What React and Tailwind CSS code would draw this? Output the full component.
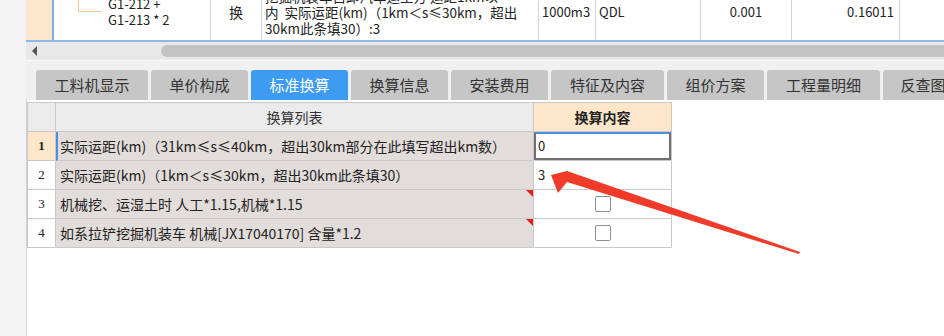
import React from 'react';

const tabs = [
  { label: '工料机显示', w: 'w-[112px]' },
  { label: '单价构成', w: 'w-[97px]' },
  { label: '标准换算', w: 'w-[97px]', active: true },
  { label: '换算信息', w: 'w-[97px]' },
  { label: '安装费用', w: 'w-[97px]' },
  { label: '特征及内容', w: 'w-[113px]' },
  { label: '组价方案', w: 'w-[97px]' },
  { label: '工程量明细', w: 'w-[113px]' },
  { label: '反查图形工程量', w: 'w-[140px]' },
];

const rows = [
  { no: '1', text: '实际运距(km)（31km≤s≤40km，超出30km部分在此填写超出km数）', value: '0', current: true },
  { no: '2', text: '实际运距(km)（1km＜s≤30km，超出30km此条填30）', value: '3' },
  { no: '3', text: '机械挖、运湿土时 人工*1.15,机械*1.15', check: true },
  { no: '4', text: '如系拉铲挖掘机装车 机械[JX17040170] 含量*1.2', check: true },
];

const Flag = () => (
  <span className="absolute top-0 right-0 w-0 h-0 border-t-[7px] border-t-[#e8201a] border-l-[7px] border-l-transparent" />
);

const App = () => {
  return (
    <div
      className="w-[944px] h-[336px] overflow-hidden bg-white flex text-[14px] text-[#222] relative"
      style={{ fontFamily: '"Noto Sans CJK SC", "Noto Sans", sans-serif' }}
    >
      {/* left strip */}
      <div className="w-[26px] shrink-0 bg-[#f3f3f3]" />

      <div className="flex-1 flex flex-col min-w-0">
        {/* upper grid, last visible row */}
        <div className="h-[42px] shrink-0 flex overflow-hidden border-b-2 border-[#8cb8ea]">
          <div className="w-[26px] shrink-0 bg-[#fde6cc]" />
          <div className="flex-1 flex bg-white border-l-2 border-[#7aaee8]">
            <div className="w-[157px] shrink-0 border-r border-[#d4d4d4] flex overflow-hidden">
              <div className="w-[24px] ml-[24px] h-[12px] border-l border-b border-[#f2c89a] shrink-0" />
              <div className="ml-[6px] -mt-[4px] whitespace-nowrap text-[13px]/[16px]">
                <div>G1-212 +</div>
                <div>G1-213 * 2</div>
              </div>
            </div>
            <div className="w-[51px] shrink-0 border-r border-[#d4d4d4] flex justify-center pt-[3px] text-[14px]/[18px]">换</div>
            <div className="w-[277px] shrink-0 border-r border-[#d4d4d4] pl-[3px] overflow-hidden">
              <div className="-mt-[12px] whitespace-nowrap text-[13.5px]/[16px]">
                <div>挖掘机装车自卸汽车运土方 运距1km以</div>
                <div>内&nbsp;&nbsp;实际运距(km)（1km＜s≤30km，超出</div>
                <div>30km此条填30）:3</div>
              </div>
            </div>
            <div className="w-[57px] shrink-0 border-r border-[#d4d4d4] pl-[3px] pt-[4px] text-[13px]/[16px]">1000m3</div>
            <div className="w-[105px] shrink-0 border-r border-[#d4d4d4] pl-[3px] pt-[4px] text-[13px]/[16px]">QDL</div>
            <div className="w-[91px] shrink-0 border-r border-[#d4d4d4] text-center pt-[4px] text-[13px]/[16px]">0.001</div>
            <div className="w-[108px] shrink-0 border-r border-[#d4d4d4] text-right pr-[5px] pt-[4px] text-[13px]/[16px]">0.16011</div>
            <div className="flex-1" />
          </div>
        </div>

        {/* horizontal scrollbar */}
        <div className="h-[19px] shrink-0 bg-[#e8e8e8] flex items-center border-b border-[#fafafa]">
          <span className="ml-[6px] w-0 h-0 border-y-[5px] border-y-transparent border-r-[5px] border-r-[#555]" />
          <div className="ml-[124px] flex-1 h-[12px] bg-[#c3c3c3] rounded-l-[6px]" />
        </div>

        {/* tab strip */}
        <div className="h-[39px] shrink-0 bg-[#f0f0f0] flex items-end gap-[3px] pl-[10px] overflow-hidden">
          {tabs.map((t) => (
            <div
              key={t.label}
              className={`${t.w} h-[30px] shrink-0 rounded-t-[3px] flex items-center justify-center whitespace-nowrap text-[15px] ${
                t.active ? 'bg-[#3d9bf2] text-white' : 'bg-[#c6c6c6] text-[#333]'
              }`}
            >
              {t.label}
            </div>
          ))}
        </div>

        {/* conversion table */}
        <div className="flex-1 bg-white border-l border-[#d0d0d0] pt-[2px]">
          <div className="grid grid-cols-[28px_478px_138px] w-[645px] border-t border-l border-[#c9c9c9]">
            <div className="h-[29px] bg-[#ebebeb] border-r border-b border-[#c9c9c9]" />
            <div className="h-[29px] bg-[#ebebeb] border-r border-b border-[#c9c9c9] flex items-center justify-center text-[#333]">
              换算列表
            </div>
            <div className="h-[29px] bg-[#fde6c9] border-r border-b border-[#c9c9c9] flex items-center justify-center font-bold">
              换算内容
            </div>

            {rows.map((r) => (
              <React.Fragment key={r.no}>
                <div
                  className={`h-[29px] border-r border-b border-[#c9c9c9] flex items-center justify-center text-[13px] ${
                    r.current ? 'bg-[#fde6c9] font-bold' : 'bg-white'
                  }`}
                  style={{ fontFamily: '"Liberation Serif", serif' }}
                >
                  {r.no}
                </div>
                <div
                  className={`h-[29px] relative bg-[#e2ddda] border-r border-b border-[#c9c9c9] flex items-center whitespace-nowrap ${
                    r.current ? 'border-l-2 border-l-[#4a8fe0] pl-[2px]' : 'pl-[4px]'
                  }`}
                >
                  {r.text}
                  {r.check && <Flag />}
                </div>
                <div className="h-[29px] bg-white border-r border-b border-[#c9c9c9] flex items-center">
                  {r.current ? (
                    <div className="w-full h-full border-2 border-[#6f6f6f] border-t-[#4a8fe0] flex items-center pl-[2px] text-[13px]">
                      {r.value}
                    </div>
                  ) : r.check ? (
                    <div className="w-full flex justify-center">
                      <span className="w-[16px] h-[16px] border border-[#8f8f8f] rounded-[2px] bg-white" />
                    </div>
                  ) : (
                    <span className="pl-[4px] text-[13px]">{r.value}</span>
                  )}
                </div>
              </React.Fragment>
            ))}
          </div>
        </div>
      </div>

      {/* red annotation arrow */}
      <svg className="absolute left-0 top-0 pointer-events-none" width="944" height="336" viewBox="0 0 944 336">
        <polygon
          points="551,175 567,171 800,252 799,254 567,182 558,193"
          fill="#f03a2a"
        />
      </svg>
    </div>
  );
};

export default App;
